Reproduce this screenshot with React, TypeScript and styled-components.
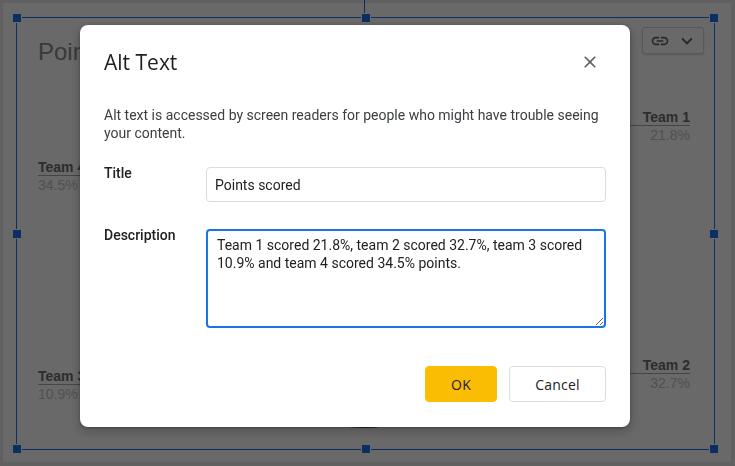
import React, { useEffect, useRef } from 'react'
import styled, { createGlobalStyle } from 'styled-components'

const GlobalStyle = createGlobalStyle`
  html, body {
    margin: 0;
    padding: 0;
    width: 735px;
    height: 466px;
    overflow: hidden;
    background: #e8e8e8;
    font-family: Roboto, 'Liberation Sans', sans-serif;
  }
`

// ---------- slide behind the dialog ----------

const Slide = styled.div`
  position: relative;
  margin: 3px;
  width: 728px;
  height: 459px;
  background: #ffffff;
  font-family: 'Liberation Sans', Arial, sans-serif;
`

const SlideHeader = styled.div`
  display: flex;
  justify-content: space-between;
  align-items: flex-start;
  height: 51px;
  padding: 24px 27px 0 35px;
  box-sizing: border-box;
`

const ChartTitle = styled.div`
  margin-top: 11px;
  font-size: 24px;
  line-height: 28px;
  color: #8a8a8a;
`

const ToolButton = styled.div`
  display: flex;
  align-items: center;
  gap: 6px;
  height: 25px;
  padding: 0 5px 0 7px;
  border: 1px solid #d6d6d6;
  border-radius: 3px;
  background: #fff;
  box-shadow: 0 1px 2px rgba(0, 0, 0, 0.15);
  color: #5f6368;
`

const ChartGrid = styled.div`
  display: grid;
  grid-template-columns: 110px 1fr 110px;
  padding: 0 41px 0 35px;
`

const LegendColumn = styled.div<{ $align: 'left' | 'right' }>`
  display: flex;
  flex-direction: column;
  text-align: ${(p) => p.$align};
`

const Legend = styled.div<{ $offset: number }>`
  margin-top: ${(p) => p.$offset}px;
`

const LegendName = styled.div`
  font-size: 14px;
  font-weight: bold;
  line-height: 16px;
  color: #6e6e6e;
  border-bottom: 1px solid #a8a8a8;
`

const LegendValue = styled.div`
  font-size: 14px;
  line-height: 18px;
  color: #c4c4c4;
`

const PieWrap = styled.div`
  display: flex;
  justify-content: center;
  padding-top: 132px;
`

const Selection = styled.div`
  position: absolute;
  left: 13px;
  top: 14px;
  width: 697px;
  height: 431px;
  border: 1px solid #1a73e8;
  pointer-events: none;
`

const RotateLine = styled.div`
  position: absolute;
  left: 347px;
  top: -18px;
  width: 1px;
  height: 18px;
  background: #1a73e8;
`

const Handle = styled.div<{ $x: string; $y: string }>`
  position: absolute;
  left: ${(p) => p.$x};
  top: ${(p) => p.$y};
  width: 10px;
  height: 10px;
  margin: -5px 0 0 -5px;
  box-sizing: border-box;
  background: #1a73e8;
  border: 1px solid #ffffff;
`

// ---------- modal ----------

const Overlay = styled.div`
  position: fixed;
  inset: 0;
  background: rgba(0, 0, 0, 0.59);
  padding: 25px 0 0 80px;
`

const Dialog = styled.div`
  width: 550px;
  box-sizing: border-box;
  padding: 23px 24px 25px 24px;
  background: #ffffff;
  border-radius: 8px;
  box-shadow: 0 4px 8px 3px rgba(0, 0, 0, 0.15), 0 1px 3px rgba(0, 0, 0, 0.3);
  font-family: Roboto, 'Liberation Sans', sans-serif;
`

const DialogHeader = styled.div`
  display: flex;
  justify-content: space-between;
  align-items: center;
  height: 28px;
`

const DialogTitle = styled.h2`
  margin: 0;
  font-family: 'Open Sans', Roboto, sans-serif;
  font-size: 21px;
  font-weight: 400;
  line-height: 28px;
  color: #202124;
`

const CloseButton = styled.button`
  display: flex;
  align-items: center;
  justify-content: center;
  width: 24px;
  height: 24px;
  margin-right: 4px;
  padding: 0;
  border: none;
  background: none;
  color: #5f6368;
  cursor: pointer;
`

const Intro = styled.p`
  margin: 30px 0 25px;
  font-size: 14px;
  line-height: 18px;
  color: #3c4043;
`

const FieldRow = styled.div<{ $spacing: number }>`
  display: grid;
  grid-template-columns: 102px 400px;
  align-items: start;
  margin-bottom: ${(p) => p.$spacing}px;
`

const FieldLabel = styled.label`
  margin-top: -2px;
  font-size: 14px;
  font-weight: 500;
  line-height: 16px;
  color: #202124;
`

const TextInput = styled.input`
  box-sizing: border-box;
  width: 400px;
  height: 35px;
  padding: 0 8px;
  border: 1px solid #dadce0;
  border-radius: 4px;
  font-family: Roboto, 'Liberation Sans', sans-serif;
  font-size: 14px;
  color: #202124;
  outline: none;
`

const TextArea = styled.textarea`
  box-sizing: border-box;
  display: block;
  width: 400px;
  height: 99px;
  margin: 0;
  padding: 5px 9px;
  border: 2px solid #1a73e8;
  border-radius: 4px;
  font-family: Roboto, 'Liberation Sans', sans-serif;
  font-size: 14px;
  line-height: 18px;
  color: #202124;
  caret-color: #202124;
  outline: none;
  resize: both;
`

const Actions = styled.div`
  display: flex;
  justify-content: flex-end;
  gap: 12px;
`

const ActionButton = styled.button<{ $primary?: boolean }>`
  height: 36px;
  min-width: ${(p) => (p.$primary ? '72px' : '97px')};
  padding: 0 16px;
  border-radius: 4px;
  border: 1px solid ${(p) => (p.$primary ? '#fbbc04' : '#dadce0')};
  background: ${(p) => (p.$primary ? '#fbbc04' : '#ffffff')};
  font-family: 'Open Sans', Roboto, sans-serif;
  font-size: 14px;
  font-weight: 500;
  letter-spacing: 0.2px;
  color: #202124;
  cursor: pointer;
`

function LinkIcon() {
  return (
    <svg width="20" height="20" viewBox="0 0 24 24" fill="currentColor">
      <path d="M3.9 12c0-1.71 1.39-3.1 3.1-3.1h4V7H7c-2.76 0-5 2.24-5 5s2.24 5 5 5h4v-1.9H7c-1.71 0-3.1-1.39-3.1-3.1zM8 13h8v-2H8v2zm9-6h-4v1.9h4c1.71 0 3.1 1.39 3.1 3.1s-1.39 3.1-3.1 3.1h-4V17h4c2.76 0 5-2.24 5-5s-2.24-5-5-5z" />
    </svg>
  )
}

function ChevronIcon() {
  return (
    <svg width="22" height="22" viewBox="0 0 24 24" fill="currentColor">
      <path d="M16.59 8.59L12 13.17 7.41 8.59 6 10l6 6 6-6z" />
    </svg>
  )
}

function CloseIcon() {
  return (
    <svg width="20" height="20" viewBox="0 0 24 24" fill="currentColor">
      <path d="M19 6.41L17.59 5 12 10.59 6.41 5 5 6.41 10.59 12 5 17.59 6.41 19 12 13.41 17.59 19 19 17.59 13.41 12z" />
    </svg>
  )
}

// pie slices, percentages from the chart
const slices = [
  { value: 21.8, color: '#3b5f9e' },
  { value: 32.7, color: '#db4437' },
  { value: 10.9, color: '#f4b400' },
  { value: 34.5, color: '#0f9d58' },
]

function Pie() {
  const r = 121
  let angle = 51
  return (
    <svg width={r * 2} height={r * 2} viewBox={`${-r} ${-r} ${r * 2} ${r * 2}`}>
      {slices.map((s, i) => {
        const start = (angle * Math.PI) / 180
        angle += (s.value / 100) * 360
        const end = (angle * Math.PI) / 180
        const large = s.value > 50 ? 1 : 0
        const d = `M0 0 L${r * Math.cos(start)} ${r * Math.sin(start)} A${r} ${r} 0 ${large} 1 ${r * Math.cos(end)} ${r * Math.sin(end)} Z`
        return <path key={i} d={d} fill={s.color} />
      })}
    </svg>
  )
}

const description =
  'Team 1 scored 21.8%, team 2 scored 32.7%, team 3 scored 10.9% and team 4 scored 34.5% points.'

export default function App() {
  const areaRef = useRef<HTMLTextAreaElement>(null)

  useEffect(() => {
    const el = areaRef.current
    if (el) {
      el.focus()
      el.setSelectionRange(el.value.length, el.value.length)
    }
  }, [])

  return (
    <>
      <GlobalStyle />
      <Slide>
        <SlideHeader>
          <ChartTitle>Points scored</ChartTitle>
          <ToolButton>
            <LinkIcon />
            <ChevronIcon />
          </ToolButton>
        </SlideHeader>
        <ChartGrid>
          <LegendColumn $align="left">
            <Legend $offset={105}>
              <LegendName>Team 4</LegendName>
              <LegendValue>34.5%</LegendValue>
            </Legend>
            <Legend $offset={174}>
              <LegendName>Team 3</LegendName>
              <LegendValue>10.9%</LegendValue>
            </Legend>
          </LegendColumn>
          <PieWrap>
            <Pie />
          </PieWrap>
          <LegendColumn $align="right">
            <Legend $offset={55}>
              <LegendName>Team 1</LegendName>
              <LegendValue>21.8%</LegendValue>
            </Legend>
            <Legend $offset={213}>
              <LegendName>Team 2</LegendName>
              <LegendValue>32.7%</LegendValue>
            </Legend>
          </LegendColumn>
        </ChartGrid>
        <Selection>
          <RotateLine />
          <Handle $x="0" $y="0" />
          <Handle $x="50%" $y="0" />
          <Handle $x="100%" $y="0" />
          <Handle $x="0" $y="50%" />
          <Handle $x="100%" $y="50%" />
          <Handle $x="0" $y="100%" />
          <Handle $x="50%" $y="100%" />
          <Handle $x="100%" $y="100%" />
        </Selection>
      </Slide>

      <Overlay>
        <Dialog role="dialog" aria-label="Alt Text">
          <DialogHeader>
            <DialogTitle>Alt Text</DialogTitle>
            <CloseButton aria-label="Close">
              <CloseIcon />
            </CloseButton>
          </DialogHeader>
          <Intro>
            Alt text is accessed by screen readers for people who might have
            trouble seeing your content.
          </Intro>
          <FieldRow $spacing={27}>
            <FieldLabel>Title</FieldLabel>
            <TextInput defaultValue="Points scored" />
          </FieldRow>
          <FieldRow $spacing={38}>
            <FieldLabel>Description</FieldLabel>
            <TextArea ref={areaRef} defaultValue={description} />
          </FieldRow>
          <Actions>
            <ActionButton $primary>OK</ActionButton>
            <ActionButton>Cancel</ActionButton>
          </Actions>
        </Dialog>
      </Overlay>
    </>
  )
}
